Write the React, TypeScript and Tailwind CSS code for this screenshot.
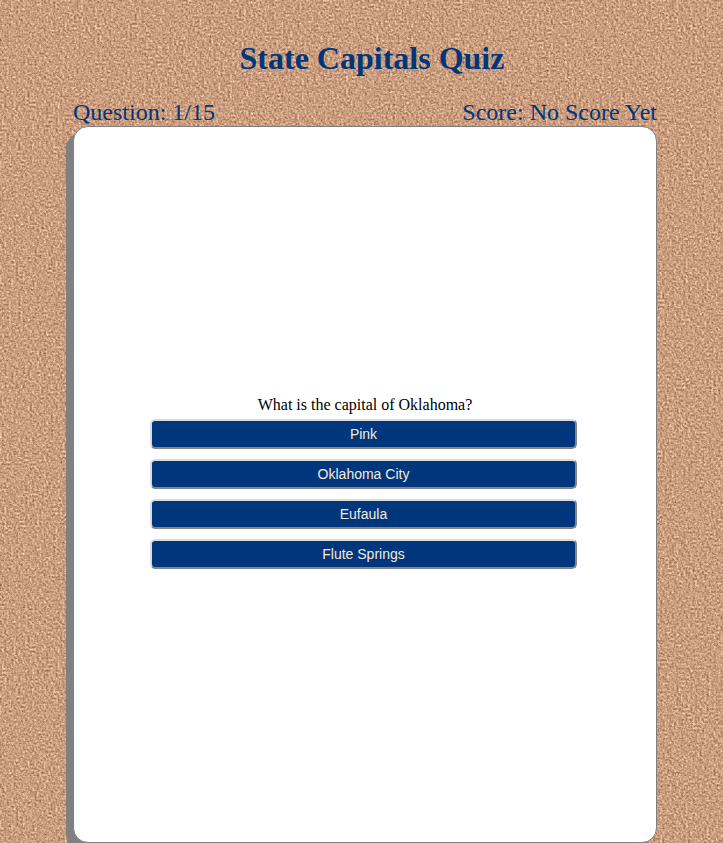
import { useState } from "react";

const choices = ["Pink", "Oklahoma City", "Eufaula", "Flute Springs"];

function CorkBoard() {
  return (
    <svg aria-hidden="true" className="absolute inset-0 -z-10 h-full w-full bg-[#cc9f80]">
      <filter id="cork" x="0" y="0" width="100%" height="100%" colorInterpolationFilters="sRGB">
        <feTurbulence type="fractalNoise" baseFrequency="0.43 0.47" numOctaves="4" seed="23" />
        <feColorMatrix
          type="matrix"
          values="0.4 0.3 0.12 0 0.38
                  0.42 0.36 0.12 0 0.165
                  0.4 0.36 0.12 0 0.055
                  0 0 0 0 1"
        />
      </filter>
      <rect width="100%" height="100%" filter="url(#cork)" />
    </svg>
  );
}

export default function App() {
  const [selected, setSelected] = useState<string | null>(null);

  return (
    <div className="relative isolate min-h-screen overflow-hidden pl-[73px] pr-[66px] font-['Liberation_Serif',serif] text-base text-black">
      <CorkBoard />
      <header className="text-[#00367b]">
        <h1 className="pl-[14px] pt-10 text-center text-[32px] leading-[37px] font-bold">
          State Capitals Quiz
        </h1>
        <div className="flex justify-between pt-[22px] text-2xl leading-[27px]">
          <p>Question: 1/15</p>
          <p>Score: No Score Yet</p>
        </div>
      </header>
      <main className="flex min-h-[85vh] flex-col items-center justify-center rounded-[15px] border border-[#808080] bg-white pt-[2px] shadow-[-7px_7px_0_0_#808080]">
        <h2 className="leading-[18px]">What is the capital of Oklahoma?</h2>
        <div className="flex w-3/4 flex-col gap-[10px] py-[5px] pl-[3px] pr-[6px]">
          {choices.map((choice) => (
            <button
              key={choice}
              type="button"
              aria-pressed={selected === choice}
              onClick={() => setSelected(choice)}
              className="h-[30px] rounded-[5px] border-2 border-t-[#dcdcdc] border-r-[#858585] border-b-[#858585] border-l-[#dcdcdc] bg-[#00367b] font-['Liberation_Sans',sans-serif] text-sm text-[#f5e9dc]"
            >
              {choice}
            </button>
          ))}
        </div>
      </main>
    </div>
  );
}
